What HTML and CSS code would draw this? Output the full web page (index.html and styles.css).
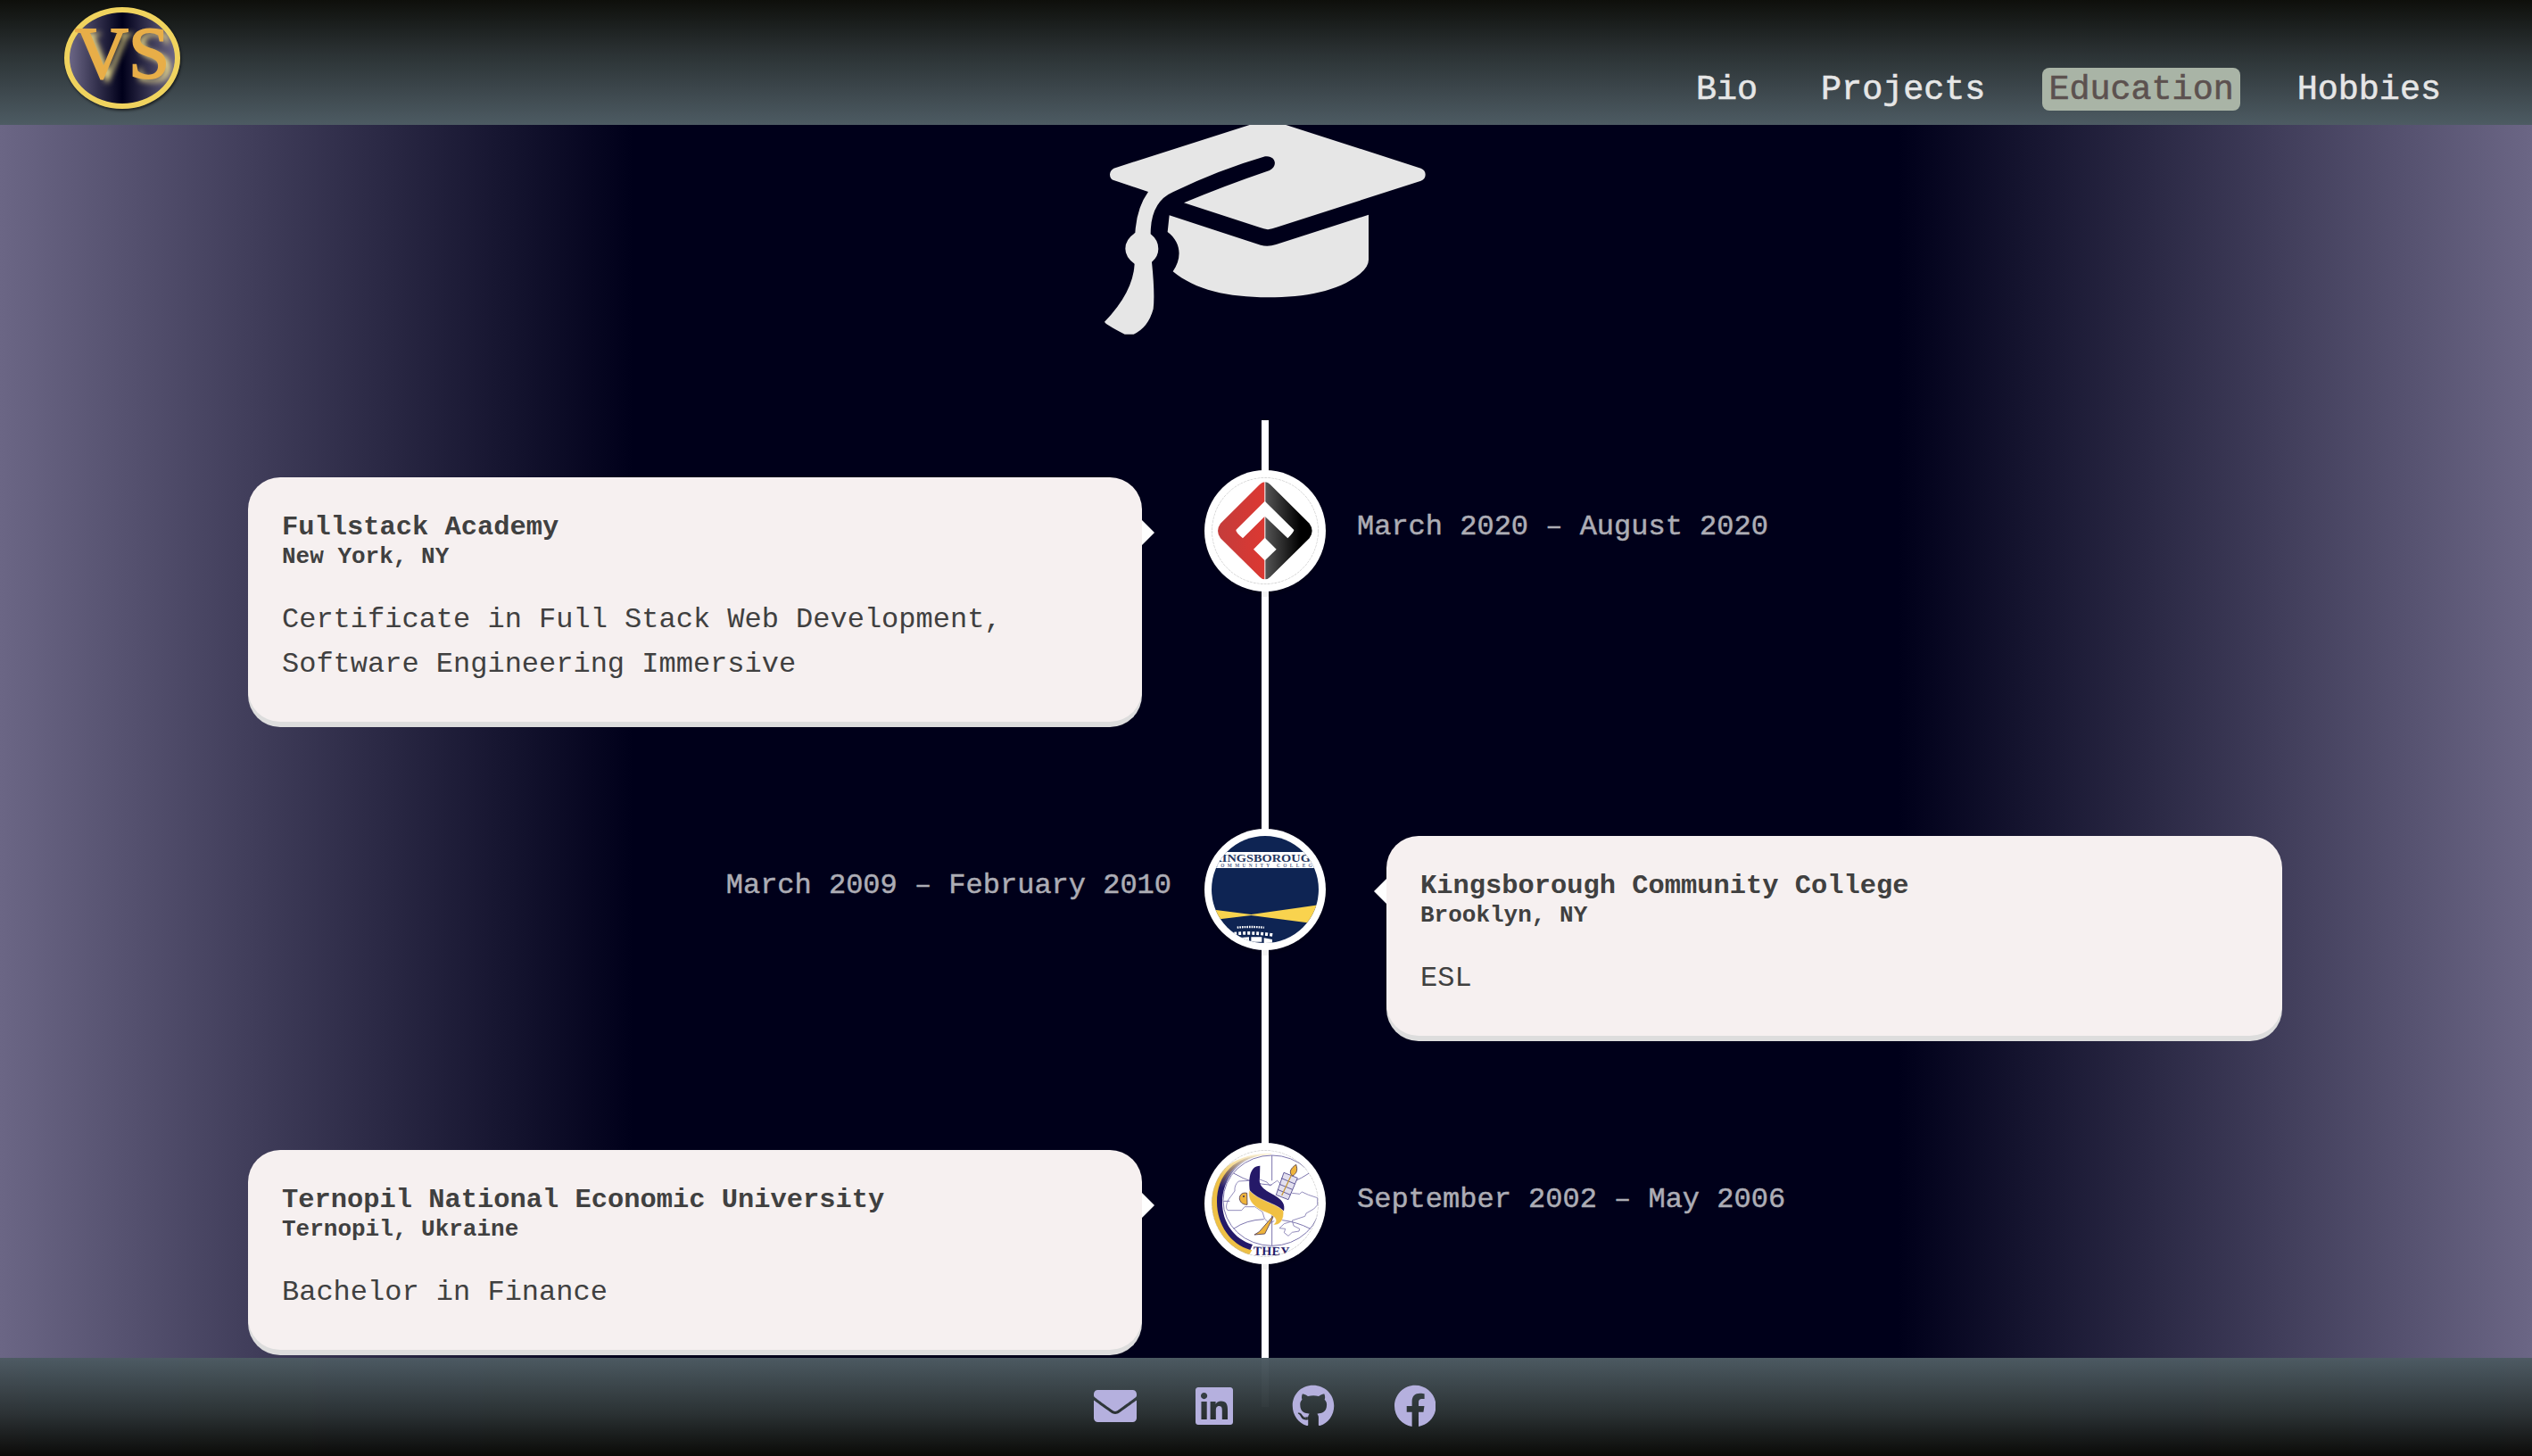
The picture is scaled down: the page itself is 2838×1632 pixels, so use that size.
FILE: index.html
```html
<!DOCTYPE html>
<html lang="en">
<head>
<meta charset="utf-8">
<title>VS – Education</title>
<link rel="stylesheet" href="styles.css">
</head>
<body>
<header class="header">
  <a class="logo">VS</a>
  <nav class="nav">
    <a class="nav-link">Bio</a>
    <a class="nav-link">Projects</a>
    <a class="nav-link active">Education</a>
    <a class="nav-link">Hobbies</a>
  </nav>
</header>

<main class="main">
  <svg class="cap" viewBox="115 40 1080 726">
    <path d="M146 207Q133 215 133 228Q133 243 148 248L262 286Q223 340 218 424Q185 446 185 477Q185 506 216 528Q211 624 115 723Q117 731 183 765H213Q262 743 279 680Q285 630 274 522Q296 504 296 478Q296 448 270 428Q270 320 345 287Q500 212 655 167C690 162 700 200 670 214Q520 265 382 323L650 410Q664 415 679 410L1179 249Q1194 243 1194 228Q1194 213 1179 207L690 50Q664 42 638 50Z"/>
    <path d="M333 365L327 421C374 456 376 510 345 554C420 616 530 641 665 641C790 641 900 620 970 565Q1003 540 1003 515V363L692 463Q664 472 640 465Z"/>
  </svg>

  <section class="timeline">
    <article class="item">
      <div class="card">
        <h3 class="title">Fullstack Academy</h3>
        <h4 class="place">New York, NY</h4>
        <p class="text">Certificate in Full Stack Web Development, Software Engineering Immersive</p>
      </div>
      <div class="marker">
        <svg viewBox="114 105 360 360">
          <defs>
            <linearGradient id="red"><stop offset="0" stop-color="#c43c3b"/><stop offset="1" stop-color="#dc3832"/></linearGradient>
            <linearGradient id="black"><stop offset="0" stop-color="#555"/><stop offset=".75" stop-color="#000"/></linearGradient>
          </defs>
          <path fill="url(#red)" d="M292 121Q284 121 276 129L144 260Q126 285 144 310L276 440Q284 448 292 448Z"/>
          <path fill="url(#black)" d="M295 121Q303 121 311 129L443 260Q461 285 443 310L311 440Q303 448 295 448Z"/>
          <path fill="#fff" d="M293 185L391 282Q392 288 370 310L293 236L219 310Q195 290 196 282ZM293 308L332 347L293 385L255 347Z"/>
          <circle class="rim" cx="294" cy="285" r="179"/>
        </svg>
      </div>
      <time class="date">March 2020 – August 2020</time>
    </article>

    <article class="item flip">
      <div class="card">
        <h3 class="title">Kingsborough Community College</h3>
        <h4 class="place">Brooklyn, NY</h4>
        <p class="text">ESL</p>
      </div>
      <div class="marker">
        <svg viewBox="114 81 360 360">
          <path fill="#0e2453" d="M114 81h360v360H114z"/>
          <path fill="#fff" d="M114 135h360v54H114z"/>
          <text class="kb-name" x="116" y="167" textLength="364" lengthAdjust="spacingAndGlyphs">KINGSBOROUGH</text>
          <text class="kb-sub" x="123" y="186" textLength="350">COMMUNITY COLLEGE</text>
          <path fill="#f9d34e" d="M114 328L247 345L474 313V378L247 348L114 364Z"/>
          <path stroke="#fff" stroke-width="7" stroke-dasharray="5 3" fill="none" d="M200 389Q245 385 291 389"/>
          <path stroke="#fff" stroke-width="11" stroke-dasharray="9 6" fill="none" d="M190 410Q250 404 320 414"/>
          <path fill="#fff" d="M180 425L240 421V441H180ZM247 421H283V437H247ZM290 424L318 429V441H290Z"/>
        </svg>
      </div>
      <time class="date">March 2009 – February 2010</time>
    </article>

    <article class="item">
      <div class="card">
        <h3 class="title">Ternopil National Economic University</h3>
        <h4 class="place">Ternopil, Ukraine</h4>
        <p class="text">Bachelor in Finance</p>
      </div>
      <div class="marker">
        <svg viewBox="114 87 360 360">
          <defs>
            <linearGradient id="fade" x1="0" y1="1" x2="0" y2="0"><stop offset=".75" stop-color="#eec045"/><stop offset="1" stop-color="#eec045" stop-opacity=".2"/></linearGradient>
            <linearGradient id="fade2" x1="0" y1="1" x2="0" y2="0"><stop offset=".65" stop-color="#241a68"/><stop offset="1" stop-color="#241a68" stop-opacity="0"/></linearGradient>
          </defs>
          <g fill="none" stroke="#7d76ae" stroke-width="3">
            <ellipse cx="317" cy="257" rx="164" ry="152"/>
            <path d="M317 105V190M317 300V409M188 165Q250 202 316 205M442 165Q390 200 345 204M153 259H175M188 352Q230 322 290 320M446 352Q400 328 345 322"/>
            <path stroke-width="2.5" d="M168 290Q158 280 170 255L192 225Q190 205 205 192L240 190L268 183L300 195L310 207L335 190L360 215L385 232L410 235L418 228L440 238L470 248V272L458 285L432 300L428 310L385 324L390 342L410 352L408 360L385 364L372 376L358 365L362 352L342 350L358 335L380 328M168 290L215 290L225 278L260 278L285 295L292 318L310 335L325 325"/>
          </g>
          <path fill="url(#fade)" d="M315 98C200 98 114 150 114 260C114 345 170 420 240 440L250 424C180 400 140 340 140 270C140 170 210 106 315 102Z"/>
          <path fill="url(#fade2)" d="M300 101C190 106 132 170 132 262C132 340 180 405 244 423L252 405C190 388 150 330 150 265C150 180 210 110 300 101Z"/>
          <path fill="#e2dfee" stroke="#48408a" stroke-width="2.5" d="M357 163L403 181L372 254L331 238ZM349 182L394 201M342 202L386 220M336 220L379 238"/>
          <path fill="none" stroke="#c4983b" stroke-width="4" d="M385 166L350 240"/>
          <path fill="#eeb43c" stroke="#4f3b50" stroke-width="2.5" d="M398 136C380 148 372 163 386 174C402 166 404 152 398 136ZM233 232C215 228 207 240 208 252C211 266 222 271 234 271ZM325 304L293 369L258 372L274 362Z"/>
          <circle cx="222" cy="243" r="3" fill="#3a2d55"/>
          <path fill="#251968" d="M277 140L276 180C270 212 300 225 330 242C352 255 362 270 357 292C330 278 265 255 243 225C238 190 240 140 277 140Z"/>
          <path fill="#f0c043" stroke="#fff" stroke-width="1.5" d="M241 222C270 258 330 265 356 292C358 320 345 343 321 338C342 325 325 308 300 298C262 283 232 260 241 222Z"/>
          <text class="tneu" x="254" y="441" textLength="122" transform="rotate(1 314 441)">THEY</text>
          <circle class="rim" cx="294" cy="267" r="179"/>
        </svg>
      </div>
      <time class="date">September 2002 – May 2006</time>
    </article>
  </section>
</main>

<footer class="footer">
  <svg class="social" style="width:48px" viewBox="0 0 512 512"><path d="M502.3 190.8c3.9-3.1 9.7-.2 9.7 4.7V400c0 26.5-21.5 48-48 48H48c-26.5 0-48-21.5-48-48V195.6c0-5 5.7-7.8 9.7-4.7 22.4 17.4 52.1 39.5 154.1 113.6 21.1 15.4 56.7 47.8 92.2 47.6 35.7.3 72-32.8 92.3-47.6 102-74.1 131.6-96.3 154-113.7zM256 320c23.2.4 56.6-29.2 73.4-41.4 132.7-96.3 142.8-104.7 173.4-128.7 5.8-4.5 9.2-11.5 9.2-18.9v-19c0-26.5-21.5-48-48-48H48c-26.5 0-48 21.5-48 48v19c0 7.4 3.4 14.3 9.2 18.9 30.6 23.9 40.7 32.4 173.4 128.7 16.8 12.2 50.2 41.8 73.4 41.4z"/></svg>
  <svg class="social" style="width:42px" viewBox="0 0 448 512"><path d="M416 32H31.9C14.3 32 0 46.5 0 64.3v383.4C0 465.5 14.3 480 31.9 480H416c17.6 0 32-14.5 32-32.3V64.3c0-17.8-14.4-32.3-32-32.3zM135.4 416H69V202.2h66.5V416zm-33.2-243c-21.3 0-38.5-17.3-38.5-38.5S80.9 96 102.2 96c21.2 0 38.5 17.3 38.5 38.5 0 21.3-17.2 38.5-38.5 38.5zm282.1 243h-66.4V312c0-24.8-.5-56.7-34.5-56.7-34.6 0-39.9 27-39.9 54.9V416h-66.4V202.2h63.7v29.2h.9c8.9-16.8 30.6-34.5 62.9-34.5 67.2 0 79.7 44.3 79.7 101.9V416z"/></svg>
  <svg class="social" style="width:48px" viewBox="-8 0 512 512"><path d="M165.9 397.4c0 2-2.3 3.6-5.2 3.6-3.3.3-5.6-1.3-5.6-3.6 0-2 2.3-3.6 5.2-3.6 3-.3 5.6 1.3 5.6 3.6zm-31.1-4.5c-.7 2 1.3 4.3 4.3 4.9 2.6 1 5.6 0 6.2-2s-1.3-4.3-4.3-5.2c-2.6-.7-5.5.3-6.2 2.3zm44.2-1.7c-2.9.7-4.9 2.6-4.6 4.9.3 2 2.9 3.3 5.9 2.6 2.9-.7 4.9-2.6 4.6-4.6-.3-1.9-3-3.2-5.9-2.9zM244.8 8C106.1 8 0 113.3 0 252c0 110.9 69.8 205.8 169.5 239.2 12.8 2.3 17.3-5.6 17.3-12.1 0-6.2-.3-40.4-.3-61.4 0 0-70 15-84.7-29.8 0 0-11.4-29.1-27.8-36.6 0 0-22.9-15.7 1.6-15.4 0 0 24.9 2 38.6 25.8 21.9 38.6 58.6 27.5 72.9 20.9 2.3-16 8.8-27.1 16-33.7-55.9-6.2-112.3-14.3-112.3-110.5 0-27.5 7.6-41.3 23.6-58.9-2.6-6.5-11.1-33.3 2.6-67.9 20.9-6.5 69 27 69 27 20-5.6 41.5-8.5 62.8-8.5s42.8 2.9 62.8 8.5c0 0 48.1-33.6 69-27 13.7 34.7 5.2 61.4 2.6 67.9 16 17.7 25.8 31.5 25.8 58.9 0 96.5-58.9 104.2-114.8 110.5 9.2 7.9 17 22.9 17 46.4 0 33.7-.3 75.4-.3 83.6 0 6.5 4.6 14.4 17.3 12.1C428.2 457.8 496 362.9 496 252 496 113.3 383.5 8 244.8 8z"/></svg>
  <svg class="social" style="width:46.5px" viewBox="8 0 496 512"><path d="M504 256C504 119 393 8 256 8S8 119 8 256c0 123.78 90.69 226.38 209.25 245V327.69h-63V256h63v-54.64c0-62.15 37-96.48 93.67-96.48 27.14 0 55.52 4.84 55.52 4.84v61h-31.28c-30.8 0-38.83 19.12-38.83 38.73V256h68.78l-11 71.69h-57.78V501C413.31 482.38 504 379.78 504 256z"/></svg>
</footer>
</body>
</html>
```
FILE: styles.css
```css
* { box-sizing: border-box; }

body {
  margin: 0;
  height: 1632px;
  overflow: hidden;
  font-family: "Courier New", "Liberation Mono", monospace;
  background: linear-gradient(to right, #6b6685, #00001a 25%, #00001a 75%, #6b6685);
}

.header {
  position: fixed;
  z-index: 2;
  top: 0;
  left: 0;
  right: 0;
  height: 140px;
  padding: 8px 95px 16px 72px;
  display: flex;
  justify-content: space-between;
  align-items: flex-start;
  background: linear-gradient(#0e0f0b, #2b3234 43%, #4d5b63);
}

.logo {
  width: 130px;
  height: 114px;
  border: 6px solid #f0d35e;
  border-radius: 50%;
  background: linear-gradient(to right, #6b6685, #00001a 50%, #6b6685);
  box-shadow: 1px 2px 3px rgba(0, 0, 0, .6);
  color: #e8ae48;
  font: 83px/91px "Liberation Serif", serif;
  -webkit-text-stroke: 2px #e8ae48;
  display: flex;
  justify-content: center;
  text-shadow: 6px 4px 6px #f0e08c;
}

.nav {
  align-self: flex-end;
  display: flex;
  gap: 57px;
}

.nav-link {
  height: 48px;
  padding: 0 7px;
  border-radius: 8px;
  color: #e6e6e6;
  font-size: 38.4px;
  line-height: 51px;
  -webkit-text-stroke: .6px;
}

.nav-link.active {
  background: #a9b4a6;
  color: #5c514f;
}

.main {
  padding: 133px 280px 0 278px;
  display: flex;
  flex-direction: column;
}

.cap {
  width: 360px;
  height: 242px;
  margin-left: 960px;
  fill: #e6e6e6;
}

.timeline {
  height: 1106px;
  margin-top: 96px;
  padding-top: 64px;
  display: flex;
  flex-direction: column;
  gap: 128px;
  background: linear-gradient(#fff, #fff) center / 8px 100% no-repeat;
}

.item {
  display: grid;
  grid-template-columns: 1002px 274px 1004px;
  align-items: start;
}

.item > * { grid-row: 1; }

.card {
  grid-column: 1;
  position: relative;
  padding: 38px 38px 39px;
  border-radius: 36px;
  background: #f6f0f0;
  box-shadow: 0 6px 0 #ddd;
  color: #404040;
}

.flip .card { grid-column: 3; }

/* pointer towards the timeline */
.card::after {
  content: "";
  position: absolute;
  top: 48px;
  left: 100%;
  border: 14px solid transparent;
  border-left-color: #fff;
  border-right-width: 0;
}

.flip .card::after {
  left: auto;
  right: 100%;
  border-width: 14px 14px 14px 0;
  border-right-color: #fff;
}

.title {
  margin: 0;
  font-size: 30.42px;
  line-height: 36px;
}

.place {
  margin: 0;
  font-size: 26px;
  line-height: 30px;
}

.text {
  margin: 31px 0 0;
  font-size: 32px;
  line-height: 50px;
}

.marker {
  grid-column: 2;
  justify-self: center;
  width: 120px;
  height: 120px;
  margin-left: 2px;
  border-radius: 50%;
  background: #fff;
  box-shadow: 0 0 0 8px #fff, 0 6px 0 8px rgba(0, 0, 0, .05);
  overflow: hidden;
}

.marker svg { display: block; width: 120px; height: 120px; }

.rim { fill: none; stroke: #b5b5b5; stroke-width: 2; stroke-dasharray: 9 3; }

.kb-name { font: bold 38px "Liberation Serif", serif; fill: #26375f; }
.kb-sub { font: bold 16px "Liberation Serif", serif; fill: #56658a; }
.tneu { font: bold 42px "Liberation Serif", serif; fill: #241a68; }

.date {
  grid-column: 3;
  margin: 38px 0 0 -33px;
  color: #adadb5;
  font-size: 32px;
  line-height: 36px;
  -webkit-text-stroke: .5px;
}

.flip .date {
  grid-column: 1;
  margin: 38px -33px 0 0;
  text-align: right;
}

.footer {
  position: fixed;
  z-index: 2;
  left: 0;
  right: 0;
  bottom: 0;
  height: 110px;
  padding: 0 3px 2px 0;
  display: flex;
  justify-content: center;
  align-items: center;
  gap: 66.4px;
  background: linear-gradient(rgba(77, 91, 99, .985), rgba(43, 50, 52, .985) 57%, rgba(10, 10, 7, .985));
}

.social { height: 48px; fill: #b5b0de; }
```
